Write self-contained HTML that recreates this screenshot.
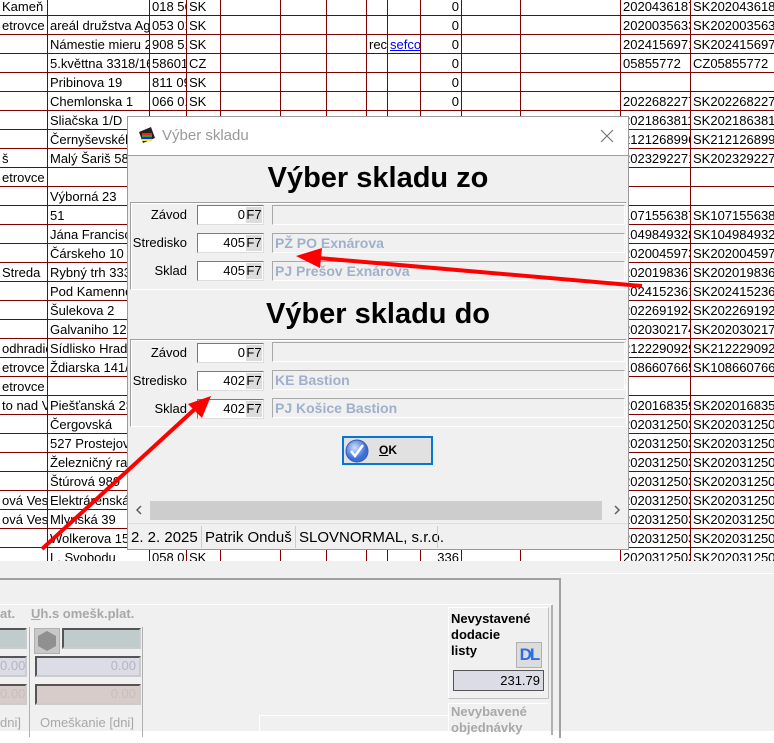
<!DOCTYPE html>
<html><head><meta charset="utf-8"><style>
*{box-sizing:border-box;margin:0;padding:0}
body{width:774px;height:731px;overflow:hidden;position:relative;background:#fff;font-family:"Liberation Sans",sans-serif;font-size:13px;color:#000}
#grid{position:absolute;left:-1px;top:-4px;border-collapse:collapse;table-layout:fixed;width:900px}
#grid td{height:19px;border:1px solid #800000;padding:0 2px;white-space:nowrap;overflow:hidden;line-height:17px;font-size:13px}
#grid td.n{text-align:right}
.abs{position:absolute}
.bottom{position:absolute;left:0;top:561px;width:774px;height:170px;background:#f0f0f0}
.dlg{position:absolute;left:127px;top:116px;width:502px;height:434px;background:#f0f0f0;border:1px solid #9a9a9a}
.tb{position:absolute;left:0;top:0;width:500px;height:38px;background:#fff}
.hdr{position:absolute;left:0;width:500px;text-align:center;font-weight:bold;font-size:29px}
.pan{position:absolute;left:2px;width:497px;height:88px;border:1px solid #a0a0a0;border-right-color:#fff;border-bottom-color:#fff;box-shadow:inset 1px 1px 0 #fff}
.lab{position:absolute;width:56px;text-align:right;font-size:13px}
.inp{position:absolute;left:66px;width:67px;height:20px;background:#fff;border:1px solid #7a7a7a;border-right-color:#ddd;border-bottom-color:#ddd;text-align:right;padding-right:18px;line-height:18px;font-size:13px}
.inp i{position:absolute;right:1px;top:1px;width:16px;height:16px;background:#dcdcdc;font-style:normal;line-height:16px;text-align:center;font-size:13px}
.desc{position:absolute;left:141px;width:353px;height:20px;border:1px solid #a8a8a8;border-right-color:#fff;border-bottom-color:#fff;color:#9fb0cc;font-weight:bold;font-size:14px;line-height:18px;padding-left:2px}
.fld{position:absolute;border:2px solid #555;border-right-color:#ccc;border-bottom-color:#ccc;text-align:right;color:#b5b5c0;font-size:13px;line-height:16px;padding-right:3px}
</style></head><body>
<table id="grid">
<colgroup><col style="width:48px"><col style="width:102px"><col style="width:37px"><col style="width:34px"><col style="width:60px"><col style="width:46px"><col style="width:40px"><col style="width:21px"><col style="width:33px"><col style="width:41px"><col style="width:59px"><col style="width:100px"><col style="width:70px"><col style="width:209px"></colgroup>
<tr><td>Kameň</td><td></td><td>018 56</td><td>SK</td><td></td><td></td><td></td><td></td><td></td><td class="n">0</td><td></td><td></td><td>2020436187</td><td>SK2020436187</td></tr>
<tr><td>etrovce</td><td>areál družstva Ag</td><td>053 01</td><td>SK</td><td></td><td></td><td></td><td></td><td></td><td class="n">0</td><td></td><td></td><td>2020035633</td><td>SK2020035633</td></tr>
<tr><td></td><td>Námestie mieru 2</td><td>908 51</td><td>SK</td><td></td><td></td><td></td><td>rec</td><td><u style="color:#00f">sefco</u></td><td class="n">0</td><td></td><td></td><td>2024156971</td><td>SK2024156970</td></tr>
<tr><td></td><td>5.květtna 3318/16</td><td>58601</td><td>CZ</td><td></td><td></td><td></td><td></td><td></td><td class="n">0</td><td></td><td></td><td>05855772</td><td>CZ05855772</td></tr>
<tr><td></td><td>Pribinova 19</td><td>811 09</td><td>SK</td><td></td><td></td><td></td><td></td><td></td><td class="n">0</td><td></td><td></td><td></td><td></td></tr>
<tr><td></td><td>Chemlonska 1</td><td>066 01</td><td>SK</td><td></td><td></td><td></td><td></td><td></td><td class="n">0</td><td></td><td></td><td>2022682277</td><td>SK2022682277</td></tr>
<tr><td></td><td>Sliačska 1/D</td><td></td><td></td><td></td><td></td><td></td><td></td><td></td><td></td><td></td><td></td><td>2021863811</td><td>SK2021863811</td></tr>
<tr><td></td><td>Černyševského</td><td></td><td></td><td></td><td></td><td></td><td></td><td></td><td></td><td></td><td></td><td>2121268996</td><td>SK2121268996</td></tr>
<tr><td>š</td><td>Malý Šariš 58</td><td></td><td></td><td></td><td></td><td></td><td></td><td></td><td></td><td></td><td></td><td>2023292271</td><td>SK2023292271</td></tr>
<tr><td>etrovce</td><td></td><td></td><td></td><td></td><td></td><td></td><td></td><td></td><td></td><td></td><td></td><td></td><td></td></tr>
<tr><td></td><td>Výborná 23</td><td></td><td></td><td></td><td></td><td></td><td></td><td></td><td></td><td></td><td></td><td></td><td></td></tr>
<tr><td></td><td>51</td><td></td><td></td><td></td><td></td><td></td><td></td><td></td><td></td><td></td><td></td><td>1071556387</td><td>SK1071556387</td></tr>
<tr><td></td><td>Jána Francisci</td><td></td><td></td><td></td><td></td><td></td><td></td><td></td><td></td><td></td><td></td><td>1049849328</td><td>SK1049849328</td></tr>
<tr><td></td><td>Čárskeho 10</td><td></td><td></td><td></td><td></td><td></td><td></td><td></td><td></td><td></td><td></td><td>2020045973</td><td>SK2020045973</td></tr>
<tr><td>Streda</td><td>Rybný trh 333</td><td></td><td></td><td></td><td></td><td></td><td></td><td></td><td></td><td></td><td></td><td>2020198367</td><td>SK2020198367</td></tr>
<tr><td></td><td>Pod Kamennou</td><td></td><td></td><td></td><td></td><td></td><td></td><td></td><td></td><td></td><td></td><td>2024152361</td><td>SK2024152361</td></tr>
<tr><td></td><td>Šulekova 2</td><td></td><td></td><td></td><td></td><td></td><td></td><td></td><td></td><td></td><td></td><td>2022691924</td><td>SK2022691924</td></tr>
<tr><td></td><td>Galvaniho 12</td><td></td><td></td><td></td><td></td><td></td><td></td><td></td><td></td><td></td><td></td><td>2020302174</td><td>SK2020302174</td></tr>
<tr><td>odhradie</td><td>Sídlisko Hrad</td><td></td><td></td><td></td><td></td><td></td><td></td><td></td><td></td><td></td><td></td><td>2122290929</td><td>SK2122290929</td></tr>
<tr><td>etrovce</td><td>Ždiarska 141/</td><td></td><td></td><td></td><td></td><td></td><td></td><td></td><td></td><td></td><td></td><td>1086607665</td><td>SK1086607665</td></tr>
<tr><td>etrovce</td><td></td><td></td><td></td><td></td><td></td><td></td><td></td><td></td><td></td><td></td><td></td><td></td><td></td></tr>
<tr><td>to nad V</td><td>Piešťanská 23</td><td></td><td></td><td></td><td></td><td></td><td></td><td></td><td></td><td></td><td></td><td>2020168359</td><td>SK2020168359</td></tr>
<tr><td></td><td>Čergovská</td><td></td><td></td><td></td><td></td><td></td><td></td><td></td><td></td><td></td><td></td><td>2020312503</td><td>SK2020312503</td></tr>
<tr><td></td><td>527 Prostejov</td><td></td><td></td><td></td><td></td><td></td><td></td><td></td><td></td><td></td><td></td><td>2020312503</td><td>SK2020312503</td></tr>
<tr><td></td><td>Železničný rad</td><td></td><td></td><td></td><td></td><td></td><td></td><td></td><td></td><td></td><td></td><td>2020312503</td><td>SK2020312503</td></tr>
<tr><td></td><td>Štúrová 989</td><td></td><td></td><td></td><td></td><td></td><td></td><td></td><td></td><td></td><td></td><td>2020312503</td><td>SK2020312503</td></tr>
<tr><td>ová Ves</td><td>Elektrárenská</td><td></td><td></td><td></td><td></td><td></td><td></td><td></td><td></td><td></td><td></td><td>2020312503</td><td>SK2020312503</td></tr>
<tr><td>ová Ves</td><td>Mlynská 39</td><td></td><td></td><td></td><td></td><td></td><td></td><td></td><td></td><td></td><td></td><td>2020312503</td><td>SK2020312503</td></tr>
<tr><td></td><td>Wolkerova 15</td><td></td><td></td><td></td><td></td><td></td><td></td><td></td><td></td><td></td><td></td><td>2020312503</td><td>SK2020312503</td></tr>
<tr><td></td><td>L. Svobodu</td><td>058 01</td><td>SK</td><td></td><td></td><td></td><td></td><td></td><td class="n">336</td><td></td><td></td><td>2020312503</td><td>SK2020312503</td></tr>
</table>

<div class="bottom">
 <div class="abs" style="left:0;top:17px;width:560px;height:2px;background:#a0a0a0"></div>
 <div class="abs" style="left:560px;top:12px;width:214px;height:1px;background:#fff"></div>
 <div class="abs" style="left:559px;top:17px;width:2px;height:160px;background:#a0a0a0"></div>
 <div class="abs" style="left:0;top:43px;width:552px;height:1px;background:#fff"></div>
 <div class="abs" style="left:551px;top:44px;width:2px;height:130px;background:#b0b0b0"></div>
 <div class="abs" style="left:0;top:45px;font-weight:bold;color:#a8a8a8;font-size:13px">at.</div>
 <div class="abs" style="left:31px;top:45px;font-weight:bold;color:#a8a8a8;font-size:13px"><u>U</u>h.s omešk.plat.</div>
 <div class="abs" style="left:29px;top:66px;width:1px;height:110px;background:#b0b0b0"></div>
 <div class="abs" style="left:142px;top:66px;width:1px;height:110px;background:#b0b0b0"></div>
 <div class="fld" style="left:-2px;top:67px;width:29px;height:21px;background:#c0cccc"></div>
 <div class="abs" style="left:34px;top:67px;width:26px;height:26px;background:#c8c8c8;border:1px solid #b0b0b0"><svg width="24" height="24"><polygon points="12,2 21,7 21,17 12,22 3,17 3,7" fill="#909090"/></svg></div>
 <div class="fld" style="left:62px;top:67px;width:79px;height:21px;background:#c0cccc"></div>
 <div class="fld" style="left:-2px;top:95px;width:29px;height:21px;background:#dcdce6">0.00</div>
 <div class="fld" style="left:35px;top:95px;width:106px;height:21px;background:#dcdce6">0.00</div>
 <div class="fld" style="left:-2px;top:123px;width:29px;height:21px;background:#d8ccca;color:#c8bebe">0.00</div>
 <div class="fld" style="left:35px;top:123px;width:106px;height:21px;background:#d8ccca;color:#c8bebe">0.00</div>
 <div class="abs" style="left:0;top:154px;color:#a8a8a8">dni]</div>
 <div class="abs" style="left:40px;top:154px;color:#a8a8a8">Omeškanie [dni]</div>
 <div class="abs" style="left:259px;top:154px;width:190px;height:20px;border-top:1px solid #fff;border-left:1px solid #fff"></div>
 <div class="abs" style="left:448px;top:46px;width:101px;height:92px;border:1px solid #fff;border-right-color:#c0c0c0;border-bottom-color:#c0c0c0"></div>
 <div class="abs" style="left:451px;top:50px;font-weight:bold;font-size:13px;line-height:16px">Nevystavené<br>dodacie<br>listy</div>
 <div class="abs" style="left:516px;top:81px;width:26px;height:26px;background:#dcdcdc;border:1px solid #b0b0b0;color:#2a6ee8;font-weight:bold;font-size:17px;line-height:24px;text-align:center;letter-spacing:-2px">DL</div>
 <div class="abs" style="left:453px;top:109px;width:91px;height:21px;background:#dcdce6;border:1px solid #555;text-align:right;padding-right:3px;line-height:19px">231.79</div>
 <div class="abs" style="left:448px;top:142px;width:100px;height:40px;border-top:1px solid #fff;border-left:1px solid #fff"></div>
 <div class="abs" style="left:451px;top:143px;font-weight:bold;color:#a8a8a8;line-height:16px">Nevybavené<br>objednávky</div>
</div>

<div class="dlg">
 <div class="tb">
  <svg class="abs" style="left:9px;top:9px" width="20" height="18"><polygon points="2,6 14,1 18,12 6,17" fill="#222"/><rect x="5" y="7" width="10" height="2" fill="#e22"/><rect x="5" y="9" width="10" height="2" fill="#2a2"/><rect x="5" y="11" width="10" height="2" fill="#22e"/><rect x="5" y="13" width="10" height="2" fill="#ee2"/></svg>
  <div class="abs" style="left:34px;top:10px;font-size:15px;color:#999">Výber skladu</div>
  <svg class="abs" style="left:472px;top:12px" width="14" height="14"><path d="M1 1L13 13M13 1L1 13" stroke="#777" stroke-width="1.2"/></svg>
 </div>
 <div class="abs" style="left:0;top:38px;width:500px;height:1px;background:#a0a0a0"></div>
 <div class="hdr" style="top:45px">Výber skladu zo</div>
 <div class="pan" style="top:85px">
  <div class="lab" style="left:0;top:4px">Závod</div><div class="inp" style="top:2px">0<i>F7</i></div><div class="desc" style="top:2px"></div>
  <div class="lab" style="left:0;top:32px">Stredisko</div><div class="inp" style="top:30px">405<i>F7</i></div><div class="desc" style="top:30px">PŽ PO Exnárova</div>
  <div class="lab" style="left:0;top:60px">Sklad</div><div class="inp" style="top:58px">405<i>F7</i></div><div class="desc" style="top:58px">PJ Prešov Exnárova</div>
 </div>
 <div class="hdr" style="top:181px">Výber skladu do</div>
 <div class="pan" style="top:222px">
  <div class="lab" style="left:0;top:5px">Závod</div><div class="inp" style="top:3px">0<i>F7</i></div><div class="desc" style="top:2px"></div>
  <div class="lab" style="left:0;top:33px">Stredisko</div><div class="inp" style="top:31px">402<i>F7</i></div><div class="desc" style="top:30px">KE Bastion</div>
  <div class="lab" style="left:0;top:61px">Sklad</div><div class="inp" style="top:59px">402<i>F7</i></div><div class="desc" style="top:58px">PJ Košice Bastion</div>
 </div>
 <div class="abs" style="left:214px;top:319px;width:91px;height:29px;border:2px solid #0078d7;background:#e1e1e1">
  <svg class="abs" style="left:1px;top:1px" width="24" height="24"><defs><radialGradient id="g" cx="40%" cy="35%"><stop offset="0" stop-color="#cfe0ff"/><stop offset="1" stop-color="#3b6fd8"/></radialGradient></defs><circle cx="12" cy="12" r="11" fill="url(#g)" stroke="#3a5ab0"/><path d="M6 12l4 5 8-11" stroke="#fff" stroke-width="2.5" fill="none"/></svg>
  <div class="abs" style="left:35px;top:5px;font-weight:bold;font-size:12px"><u>O</u>K</div>
 </div>
 <div class="abs" style="left:0;top:383px;width:500px;height:21px;background:#f0f0f0">
  <div class="abs" style="left:22px;top:1px;width:452px;height:19px;background:#cdcdcd"></div>
  <svg class="abs" style="left:6px;top:5px" width="10" height="10"><path d="M7 1L3 5L7 9" stroke="#606060" stroke-width="1.5" fill="none"/></svg>
  <svg class="abs" style="left:484px;top:5px" width="10" height="10"><path d="M3 1L7 5L3 9" stroke="#606060" stroke-width="1.5" fill="none"/></svg>
 </div>
 <div class="abs" style="left:0;top:406px;width:500px;height:26px;background:#f0f0f0;border-top:1px solid #ddd;font-size:15px;line-height:28px">
  <span class="abs" style="left:3px">2. 2. 2025</span>
  <div class="abs" style="left:73px;top:2px;width:1px;height:22px;background:#ccc"></div>
  <span class="abs" style="left:77px">Patrik Onduš</span>
  <div class="abs" style="left:167px;top:2px;width:1px;height:22px;background:#ccc"></div>
  <span class="abs" style="left:171px">SLOVNORMAL, s.r.o.</span>
  <div class="abs" style="left:309px;top:2px;width:1px;height:22px;background:#ccc"></div>
 </div>
</div>

<svg class="abs" style="left:0;top:0" width="774" height="731">
 <line x1="642" y1="286" x2="318" y2="258" stroke="#f00" stroke-width="4"/>
 <polygon points="296,256 322,248 320,268" fill="#f00"/>
 <line x1="42" y1="549" x2="196" y2="408" stroke="#f00" stroke-width="4"/>
 <polygon points="211,396 202,418 188,404" fill="#f00"/>
</svg>
</body></html>
